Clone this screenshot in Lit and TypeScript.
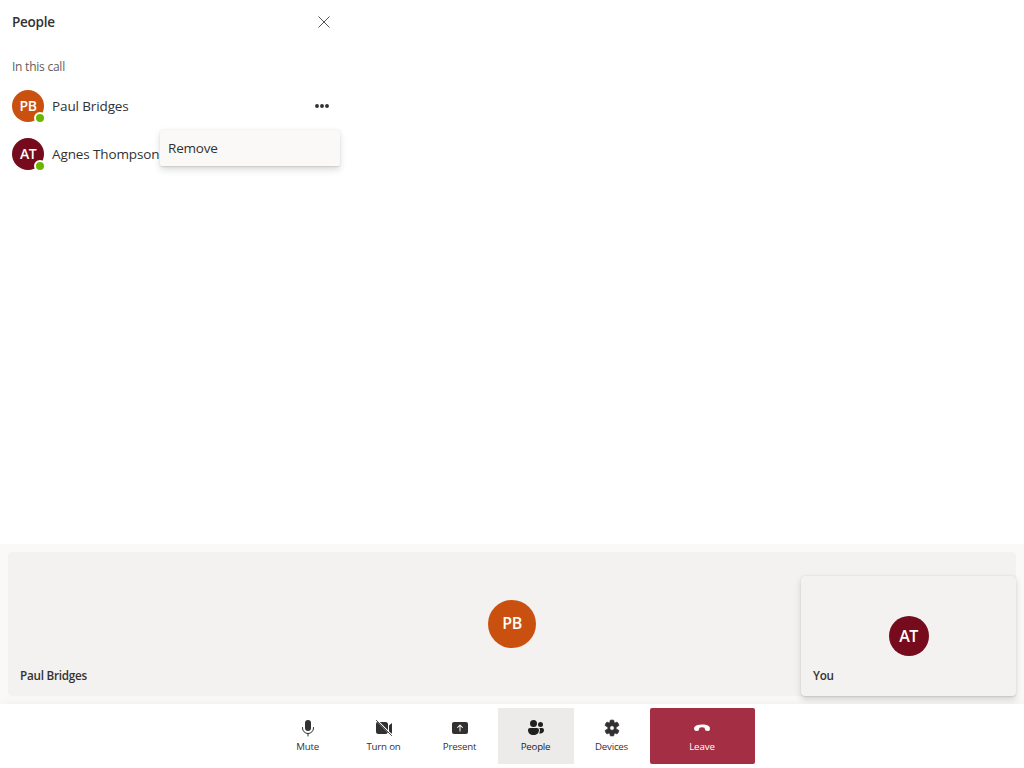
import { LitElement, html, css, svg } from "lit";
import { customElement, property } from "lit/decorators.js";

const glyphs: Record<string, unknown> = {
  close: svg`<path d="M4.5 4.5 15.5 15.5M15.5 4.5 4.5 15.5" fill="none" stroke="currentColor" stroke-width=".85"/>`,
  more: svg`<circle cx="5" cy="10" r="1.95"/><circle cx="10" cy="10" r="1.95"/><circle cx="15" cy="10" r="1.95"/>`,
  mic: svg`<rect x="7" y="2" width="6" height="11" rx="3"/><path d="M4.5 9.500v.5a5.500 5.500 0 0 0 11 0v-.5M10 15.500V18" fill="none" stroke="currentColor" stroke-width="1" stroke-linecap="round"/>`,
  camera: svg`<path d="M3 3.700 13.800 14.500c-.4.9-1.300 1.500-2.300 1.500h-7A2.500 2.500 0 0 1 2 13.500v-7c0-1.200.3-2.100 1-2.800ZM5.700 4h5.800A2.500 2.500 0 0 1 14 6.500v5.800L5.700 4Zm9.300 3.500 2.200-2.100c.3-.2.8 0 .8.4v9.100c0 .5-.3.800-.6.500L15 13.200V7.500Z"/><path d="m2.400 2.400 15.200 15.200" fill="none" stroke="currentColor" stroke-width=".9" stroke-linecap="round"/>`,
  present: svg`<path fill-rule="evenodd" d="M4 4h12a2 2 0 0 1 2 2v8a2 2 0 0 1-2 2H4a2 2 0 0 1-2-2V6c0-1.100.9-2 2-2Zm6.350 2.650a.5.5 0 0 0-.7 0l-2.500 2.500a.5.5 0 0 0 .7.7L9.500 8.200v4.800a.5.5 0 0 0 1 0V8.200l1.650 1.650a.5.5 0 0 0 .7-.7l-2.500-2.500Z"/>`,
  people: svg`<circle cx="7.500" cy="5.500" r="3.500"/><circle cx="14.500" cy="6.500" r="2.500"/><path d="M4 10h7a2 2 0 0 1 2 2c0 3-2.200 5-5.500 5S2 15 2 12c0-1.100.9-2 2-2Zm9.200 0H16a2 2 0 0 1 2 2c0 2.100-1.400 3.500-3.700 3.500-.5 0-.8 0-1.200-.1.6-.9.9-2.100.9-3.400 0-.8-.3-1.500-.8-2Z"/>`,
  settings: svg`<path fill-rule="evenodd" stroke="currentColor" stroke-width=".7" stroke-linejoin="round" d="m8.200 2.300.3-.1a8 8 0 0 1 3 0l.3.1.3 1.900c.1.500.7.800 1.200.600l1.800-.7.3.3a8 8 0 0 1 1.500 2.600l.1.300-1.500 1.200a1.500 1.500 0 0 0 0 3l1.500 1.200-.1.300a8 8 0 0 1-1.500 2.600l-.3.3-1.800-.7c-.5-.2-1.100.1-1.200.6l-.3 1.900-.3.1a8 8 0 0 1-3 0l-.3-.1-.3-1.900c-.1-.5-.7-.8-1.200-.6l-1.800.7-.3-.3A8 8 0 0 1 3.100 13l-.1-.3 1.500-1.200a1.500 1.500 0 0 0 0-3L3 7.300l.1-.3a8 8 0 0 1 1.500-2.600l.3-.3 1.800.7c.5.2 1.100-.1 1.200-.6l.3-1.900ZM10 7.700a2.300 2.300 0 1 0 0 4.600 2.300 2.300 0 0 0 0-4.600Z"/>`,
  leave: svg`<path d="m17.960 10.940-.16.830c-.14.780-.87 1.290-1.700 1.200l-1.630-.16c-.72-.07-1.250-.590-1.470-1.330-.3-1-.5-1.750-.5-1.750A6.600 6.600 0 0 0 10 9.250a6.300 6.300 0 0 0-2.500.480s-.2.750-.5 1.750c-.2.670-.5 1.260-1.200 1.330l-1.630.160c-.81.080-1.600-.430-1.830-1.200l-.250-.830c-.24-.820-.04-1.680.58-2.270C4.110 7.240 6.560 6.520 9.990 6.510c3.440 0 5.780.640 7.170 2.020.68.670.960 1.500.8 2.410Z"/>`,
};

@customElement("call-icon")
class CallIcon extends LitElement {
  @property() name = "";
  static styles = css`
    :host { display: block; width: 20px; height: 20px; }
    svg { display: block; width: 20px; height: 20px; fill: currentColor; }
  `;
  render() {
    return html`<svg viewBox="0 0 20 20" aria-hidden="true">${glyphs[this.name]}</svg>`;
  }
}

@customElement("app-root")
class AppRoot extends LitElement {
  people = [
    { name: "Paul Bridges", initials: "PB", tone: "orange", menu: true },
    { name: "Agnes Thompson", initials: "AT", tone: "wine", menu: false },
  ];
  controls = [
    { icon: "mic", label: "Mute", kind: "" },
    { icon: "camera", label: "Turn on", kind: "" },
    { icon: "present", label: "Present", kind: "" },
    { icon: "people", label: "People", kind: "active" },
    { icon: "settings", label: "Devices", kind: "" },
    { icon: "leave", label: "Leave", kind: "leave" },
  ];

  static styles = css`
    :host {
      display: flex; flex-direction: column; width: 100%; height: 100vh;
      overflow: hidden; background: #fff; color: #323130;
      font: 13.5px/20px "Open Sans", "Noto Sans", sans-serif;
    }
    * { box-sizing: border-box; }
    button { font: inherit; color: inherit; border: 0; background: none; padding: 0; margin: 0; }
    .panel { flex: 1; width: 340px; }
    .head { display: flex; justify-content: space-between; align-items: center; height: 44px; padding: 0 6px 0 12px; }
    .title { font-size: 13.5px; font-weight: 600; letter-spacing: -0.25px; }
    .sub { padding: 13px 12px 0; font-size: 12px; color: #605e5c; line-height: 20px; height: 38px; letter-spacing: -0.24px; }
    .person { position: relative; display: flex; align-items: center; gap: 8px; height: 48px; padding: 0 8px 0 12px; }
    .name { flex: 1; letter-spacing: -0.12px; }
    .coin { position: relative; display: flex; align-items: center; justify-content: center; width: 32px; height: 32px; border-radius: 50%; color: #fff; font-size: 14px; font-weight: 600; letter-spacing: -0.5px; }
    .orange { background: #ca5010; }
    .wine { background: #750b1c; }
    .status { position: absolute; right: -2px; bottom: -2px; width: 12px; height: 12px; border: 2px solid #fff; border-radius: 50%; background: #6bb700; }
    .menu { position: absolute; z-index: 2; left: 160px; top: 48px; width: 180px; height: 36px; padding: 0 8px; line-height: 36px; letter-spacing: -0.2px; background: #faf9f8; border-radius: 2px; box-shadow: 0 3.2px 7.2px rgba(0,0,0,.132), 0 .6px 1.8px rgba(0,0,0,.108); }
    .stage { display: flex; height: 160px; padding: 8px; background: #faf9f8; }
    .tile { position: relative; flex: 1; display: flex; align-items: center; justify-content: center; background: #f3f2f1; border-radius: 4px; }
    .tag { position: absolute; left: 12px; bottom: 13px; font-size: 11.7px; line-height: 16px; font-weight: 600; letter-spacing: -0.25px; }
    .big { width: 48px; height: 48px; font-size: 16px; padding-bottom: 2px; }
    .self { position: absolute; right: 0; bottom: 0; width: 215px; height: 120px; display: flex; align-items: center; justify-content: center; background: #f3f2f1; border-radius: 4px; box-shadow: 0 3.2px 7.2px rgba(0,0,0,.132), 0 .6px 1.8px rgba(0,0,0,.108); }
    .mid { width: 40px; height: 40px; font-size: 16px; }
    .bar { position: relative; display: flex; justify-content: center; height: 64px; padding: 4px 0; background: #fff; box-shadow: 0 6.4px 14.4px rgba(0,0,0,.132); }
    .ctl { display: flex; flex-direction: column; align-items: center; width: 76px; height: 56px; padding-top: 10px; }
    .ctl span { font-size: 9.7px; line-height: 14px; margin-top: 2px; letter-spacing: -0.2px; }
    .active { background: #edebe9; color: #201f1e; }
    .ctl.leave { width: 105px; background: #a42e43; color: #fff; border-radius: 2px; }
    .ctl.leave span { letter-spacing: -0.1px; }
  `;

  render() {
    return html`
      <section class="panel">
        <header class="head">
          <div class="title">People</div>
          <button aria-label="Close"><call-icon name="close"></call-icon></button>
        </header>
        <div class="sub">In this call</div>
        ${this.people.map((p) => html`
          <div class="person">
            <div class="coin ${p.tone}">${p.initials}<i class="status"></i></div>
            <div class="name">${p.name}</div>
            ${p.menu ? html`
              <button aria-label="More"><call-icon name="more"></call-icon></button>
              <div class="menu" role="menu">Remove</div>` : ""}
          </div>`)}
      </section>
      <section class="stage">
        <div class="tile">
          <div class="coin orange big">PB</div>
          <div class="tag">Paul Bridges</div>
          <div class="self">
            <div class="coin wine mid">AT</div>
            <div class="tag">You</div>
          </div>
        </div>
      </section>
      <nav class="bar">
        ${this.controls.map((c) => html`
          <button class="ctl ${c.kind}"><call-icon name=${c.icon}></call-icon><span>${c.label}</span></button>`)}
      </nav>`;
  }
}
